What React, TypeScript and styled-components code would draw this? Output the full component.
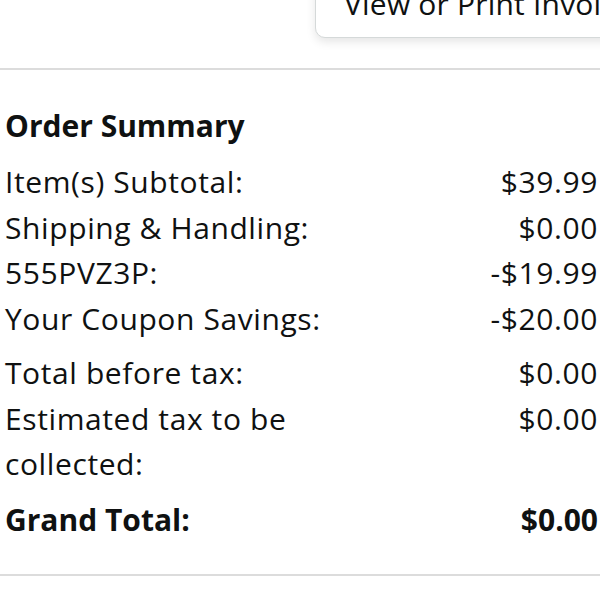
import React from "react";
import styled, { createGlobalStyle } from "styled-components";

const Global = createGlobalStyle`
  html, body { margin: 0; padding: 0; background: #fff; overflow: hidden; }
  body { font-family: "Open Sans", "Noto Sans", sans-serif; color: #0f1111; }
`;

const Page = styled.div`
  width: 600px;
  height: 600px;
  overflow: hidden;
  display: flex;
  flex-direction: column;
`;

const TopBar = styled.div`
  display: flex;
  justify-content: flex-start;
  padding-left: 315px;
  height: 68px;
  border-bottom: 2px solid #dcdcdc;
`;

const InvoiceButton = styled.button`
  flex-shrink: 0;
  margin-top: -40px;
  height: 78px;
  padding: 0 28px 18px;
  background: #fff;
  border: 1px solid #d5d9d9;
  border-radius: 10px;
  box-shadow: 0 4px 10px rgba(0, 0, 0, 0.1);
  font-family: inherit;
  font-size: 30px;
  letter-spacing: 0.2px;
  color: #0f1111;
  white-space: nowrap;
  display: flex;
  align-items: flex-end;
  box-sizing: border-box;
  line-height: 1;
`;

const Summary = styled.section`
  padding: 33px 2px 32px 5px;
  border-bottom: 2px solid #dcdcdc;
`;

const Title = styled.h2`
  margin: 0 0 11px;
  font-size: 30px;
  font-weight: 700;
  line-height: 45px;
`;

const Group = styled.div<{ $gap?: number }>`
  display: flex;
  flex-direction: column;
  margin-top: ${(p) => p.$gap ?? 0}px;
`;

const Row = styled.div<{ $bold?: boolean }>`
  display: flex;
  justify-content: space-between;
  align-items: flex-start;
  font-size: 30px;
  line-height: 45.5px;
  font-weight: ${(p) => (p.$bold ? 700 : 400)};
  letter-spacing: ${(p) => (p.$bold ? 0 : 0.6)}px;
`;

const Label = styled.span`
  max-width: 360px;
`;

const Value = styled.span`
  text-align: right;
  white-space: nowrap;
`;

const rows1 = [
  ["Item(s) Subtotal:", "$39.99"],
  ["Shipping & Handling:", "$0.00"],
  ["555PVZ3P:", "-$19.99"],
  ["Your Coupon Savings:", "-$20.00"],
];
const rows2 = [
  ["Total before tax:", "$0.00"],
  ["Estimated tax to be collected:", "$0.00"],
];

export default function App() {
  return (
    <>
      <Global />
      <Page>
        <TopBar>
          <InvoiceButton>View or Print Invoice</InvoiceButton>
        </TopBar>
        <Summary>
          <Title>Order Summary</Title>
          <Group>
            {rows1.map(([l, v]) => (
              <Row key={l}>
                <Label>{l}</Label>
                <Value>{v}</Value>
              </Row>
            ))}
          </Group>
          <Group $gap={9}>
            {rows2.map(([l, v]) => (
              <Row key={l}>
                <Label>{l}</Label>
                <Value>{v}</Value>
              </Row>
            ))}
          </Group>
          <Group $gap={10}>
            <Row $bold>
              <Label>Grand Total:</Label>
              <Value>$0.00</Value>
            </Row>
          </Group>
        </Summary>
      </Page>
    </>
  );
}
